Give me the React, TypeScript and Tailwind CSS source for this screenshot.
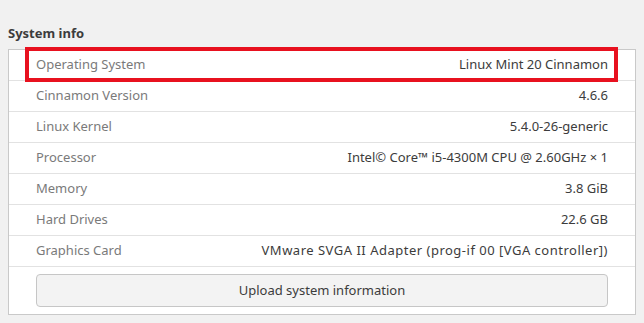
import React from "react";

const rows: [string, string, string][] = [
  ["Operating System", "Linux Mint 20 Cinnamon", ""],
  ["Cinnamon Version", "4.6.6", ""],
  ["Linux Kernel", "5.4.0-26-generic", ""],
  ["Processor", "Intel\u00A9 Core\u2122 i5-4300M CPU @ 2.60GHz \u00D7 1", ""],
  ["Memory", "3.8 GiB", ""],
  ["Hard Drives", "22.6 GB", ""],
  ["Graphics Card", "VMware SVGA II Adapter (prog-if 00 [VGA controller])", "tracking-[0.5px]"],
];

export default function App() {
  return (
    <div
      className="relative w-[644px] h-[323px] overflow-hidden bg-[#f1f1f1] px-2 pt-[24px] text-[13px]"
      style={{ fontFamily: '"Noto Sans", "Open Sans", sans-serif' }}
    >
      <div className="h-[18px] leading-[18px] font-bold text-[#3c3c3c] mb-[7px]">System info</div>
      <div className="w-[628px] border border-[#c9c9c9] bg-white">
        {rows.map(([k, v, extra]) => (
          <div
            key={k}
            className="h-[31px] flex items-center justify-between border-b border-[#e2e2e2] pl-[27px] pr-[27px]"
          >
            <span className="text-[#7a7a7a]">{k}</span>
            <span className={extra ? "text-[#3c3c3c] tracking-[0.5px]" : "text-[#3c3c3c]"}>{v}</span>
          </div>
        ))}
        <div className="px-[27px] pt-[7px] pb-[7px]">
          <div className="h-[33px] flex items-center justify-center rounded-[4px] border border-[#c6c6c6] bg-[#f3f3f3] text-[#3c3c3c]">
            Upload system information
          </div>
        </div>
      </div>
      <div className="absolute left-[25px] top-[47px] w-[593px] h-[35px] border-[4px] border-[#e8111f]" />
    </div>
  );
}
